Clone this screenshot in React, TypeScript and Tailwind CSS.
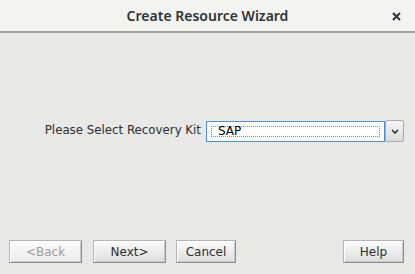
import React from "react";

const btn =
  "h-[23px] border border-[#8e8e8e] border-t-[#b4b4b4] border-l-[#b4b4b4] shadow-[inset_1px_1px_0_#ffffff,inset_-1px_-1px_0_#c8c8c8] bg-gradient-to-b from-[#fbfbfb] to-[#dedede] text-[12px] text-[#2e2e2e] flex items-center justify-center";

function Button({ label, w, disabled }: { label: string; w: string; disabled?: boolean }) {
  return (
    <div
      className={`${btn} ${w} ${disabled ? "from-[#f3f3f3] to-[#ececec] text-[#9c9c9c]" : ""}`}
    >
      {label}
    </div>
  );
}

export default function App() {
  return (
    <div
      className="flex h-[274px] w-[415px] flex-col bg-[#e8e8e7] text-[#2e3436]"
      style={{ fontFamily: '"DejaVu Sans", sans-serif' }}
    >
      {/* title bar */}
      <div className="relative flex h-[33px] items-center justify-center border-b-2 border-[#a3a3a0] bg-[#f3f3f2]">
        <span className="text-[14px] font-semibold text-[#2e3436]" style={{ fontFamily: '"Noto Sans", sans-serif' }}>
          Create Resource Wizard
        </span>
        <svg className="absolute right-[14px] top-[12px]" width="9" height="9" viewBox="0 0 9 9">
          <path d="M1 1 L8 8 M8 1 L1 8" stroke="#2e3436" strokeWidth="2" />
        </svg>
      </div>

      {/* body */}
      <div className="flex flex-1 flex-col">
        <div className="flex items-center justify-end gap-[5px] pr-[11px] pt-[87px]">
          <span className="text-[11.8px] text-[#2e2e2e]">Please Select Recovery Kit</span>
          <div className="flex items-center">
            <div className="flex h-[21px] w-[179px] items-center border border-[#4a90d9] bg-white px-[4px]">
              <div className="flex h-[11px] w-full items-center border border-dotted border-[#8a8a8a] pl-[6px]">
                <span className="text-[12px] leading-none text-black">SAP</span>
              </div>
            </div>
            <div className="flex h-[22px] w-[19px] items-center justify-center rounded-[2px] border border-[#a8a8a8] bg-gradient-to-b from-[#f4f4f4] to-[#dcdcdc]">
              <svg width="8" height="5" viewBox="0 0 8 5">
                <path d="M1 1 L4 4 L7 1" stroke="#2e3436" strokeWidth="1.6" fill="none" />
              </svg>
            </div>
          </div>
        </div>

        <div className="mt-auto flex items-center pb-[11px] pl-[9px] pr-[11px]">
          <Button label="<Back" w="w-[73px]" disabled />
          <div className="ml-[11px]">
            <Button label="Next>" w="w-[73px]" />
          </div>
          <div className="ml-[10px]">
            <Button label="Cancel" w="w-[60px]" />
          </div>
          <div className="ml-auto">
            <Button label="Help" w="w-[61px]" />
          </div>
        </div>
      </div>
    </div>
  );
}
